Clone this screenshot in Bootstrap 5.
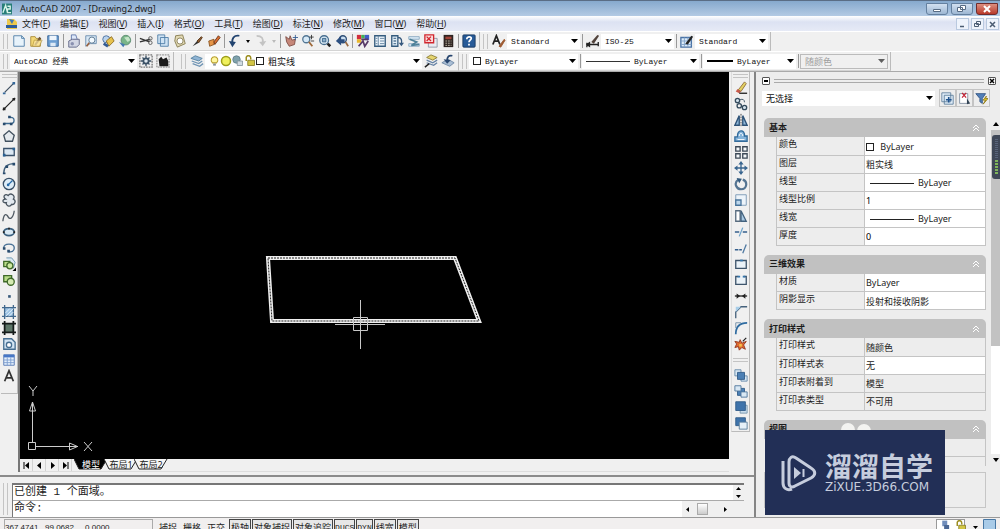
<!DOCTYPE html>
<html lang="zh-CN">
<head>
<meta charset="utf-8">
<meta name="viewport" content="width=device-width, initial-scale=1">
<title>AutoCAD 2007 - [Drawing2.dwg]</title>
<link href="https://cdn.jsdelivr.net/npm/bootstrap@5.3.0/dist/css/bootstrap.min.css" rel="stylesheet">
<style>
:root{--face:#f0f0f0;--edge:#b4b4b4;--ui:"Noto Sans","Noto Sans CJK SC",sans-serif;--mono:"Liberation Mono","Noto Sans CJK SC",monospace}
body{height:100vh;background:var(--face);font:9px/12px var(--ui);color:#1c1c1c}
button{border:0;background:none;padding:0;color:inherit;font:inherit;line-height:inherit}
svg{display:block;flex:none}
.ico{width:14px;height:14px}
.title-bar{height:16px;border-top:1px solid #5a6d85;background:linear-gradient(#86a9cd,#b3cae4);font-size:9px;padding:0 2px}
.win-set{gap:3px}
.win-btn{width:22px;height:12px;border:1px solid #64809f;border-radius:0 0 3px 3px;background:linear-gradient(#d2e0f0,#9db7d3)}
.win-btn.shut{background:linear-gradient(#dd8f80,#b8392a);border-color:#702c2c}
.menu-bar{height:15px;background:linear-gradient(#fff,#dce2f2 40%,#e6eaf6);padding:0 1px 0 6px}
.menu-bar a{color:#1c1c1c;text-decoration:none;font-size:9px;margin-right:10px;white-space:nowrap}
.mdi-set{gap:2px}
.mdi-btn{width:13px;height:12px;border:1px solid #b9c9df;background:#eef3fb}
.tool-row{height:20px;border-top:1px solid #fff}
.tool-row.second{height:21px;border-bottom:1px solid #aaa}
.band{height:19px;border-right:1px solid #bbb;border-bottom:1px solid #d4d4d4;padding-right:2px}
.grip{width:5px;height:15px;border:solid #c4c4c4;border-width:0 1px;margin:0 2px 0 3px;flex:none}
.grip-h{width:15px;height:4px;border:solid #c4c4c4;border-width:1px 0;margin:2px 0;flex:none}
.grip-h.mid{margin:6px 0 5px}
.tool{width:17px;height:17px;display:flex;align-items:center;justify-content:center;flex:none}
.drop{width:9px;height:17px;display:flex;align-items:center;justify-content:center;flex:none}
.vsep{width:1px;height:14px;background:#999;margin:0 1px 0 2px;flex:none}
.combo{height:15px;background:#fff;display:flex;align-items:center;flex:none;padding-left:4px;min-width:0}
.combo .form-select{border:0;border-radius:0;padding:0 10px 0 0;height:15px;min-width:0;flex:1;font:8px/15px var(--mono);color:#111;background-color:transparent;background-size:7px 4px;background-position:right 2px center;
--bs-form-select-bg-img:url("data:image/svg+xml,%3Csvg xmlns='http://www.w3.org/2000/svg' viewBox='0 0 7 4'%3E%3Cpath d='M0 0h7L3.500 4z'/%3E%3C/svg%3E")}
.combo .form-select.cn{font:9px/15px var(--ui)}
.combo.off{background:var(--face);border:1px solid #bbb}
.combo.off .form-select{color:#666;height:13px;line-height:13px;opacity:.6}
.swatch{width:8px;height:8px;border:1px solid #222;background:#fff;flex:none;display:inline-block}
.side{width:20px;padding-left:1px;border-right:2px solid #777}
.side-in{width:17px;padding-bottom:9px;border:solid #bbb;border-width:0 1px 1px 0}
.side .tool,.side-r .tool{height:16px}
.side-r{width:25px;padding-left:2px}
.side-r .side-in{width:19px;border-left:1px solid #ddd;padding-bottom:0}
.model{background:#000;min-height:0}
.ucs{left:4px;bottom:1px}
.tabs{height:13px;border-bottom:1px solid #ddd}
.nav-b{width:13px;height:12px;border-right:1px solid #d2d2d2;display:flex;align-items:center;justify-content:center}
.sheet{position:relative;height:11px;line-height:10px;margin-right:-4px;width:34px;text-align:center;color:#222;white-space:nowrap}
.sheet svg{position:absolute;left:0;top:0;z-index:-1}
.tabs-in{isolation:isolate;padding-left:2px}
.sheet.on{color:#fff}
.console{height:42px;margin-top:3px;border-top:2px solid #8b8b8b;padding:6px 10px 0 0}
.console-in{border:1px solid #777;border-width:2px 0 0 1px;font:11px/15px var(--mono);color:#222}
.console .grip{height:32px;margin-right:4px}
.log{height:16px;background:#fff;border-bottom:1px solid #aaa;padding-left:1px;white-space:pre}
.cmd{height:16px;padding-left:1px;background:#fff}
.cmd input{border:0;outline:0;padding:0;min-width:0;font:inherit;height:15px}
.sb-v{width:11px;height:15px;background:var(--face)}
.sb-h{width:62px;height:16px;background:var(--face);font-size:8px}
.thumb{width:11px;height:12px;border:1px solid #aaa;background:linear-gradient(#fff,#ccc)}
.palette{width:246px;border-left:2px solid #858585;padding:5px 0 0 6px;background:#ededed}
.dline{height:4px;border:solid #aaa;border-width:1px 0}
.box-btn{width:8px;height:8px;border:1px solid #555;border-radius:1px;background:#fff;display:flex;align-items:center;justify-content:center}
.pick{margin:4px 0 11px}
.pal-btn{width:17px;height:18px;border:1px solid #c4c4c4;display:flex;align-items:center;justify-content:center}
.sheets{height:348px}
.sec-list{padding-left:2px}
.sec{margin-bottom:9px;width:222px}
.sec-h{height:19px;width:100%;background:#c1c1c1;border-radius:5px 5px 0 0;font-weight:700;font-size:9px;padding:0 6px 0 5px}
.props{width:210px;margin-left:12px;table-layout:fixed;border-collapse:collapse;font-size:9px;line-height:12px}
.props th{width:88px;font-weight:400;padding:0 0 3px 2px;border:1px solid #c4c4c4;height:18px;line-height:14px;border-top:0}
.props td{background:#fff;border:1px solid #c4c4c4;padding:2px 0 0 1px;border-top:0;height:18px;line-height:14px}
.props td.ro{background:#ededed}
.props input{border:0;padding:0;height:14px;width:100px;outline:0;background:none;display:block;font-size:9px}
.scroller{width:9px;background:#fff}
.scroller .bar{height:216px;background:#c2c2c2}
.scroller .arr{height:12px;background:#ededed}
.gauge{width:8px;height:44px;right:0;top:63px;background:#3f4757;border-radius:3px 0 0 3px}
.hint{height:36px;border:1px solid #c6c6c6;width:222px;margin:6px 0 0 2px}
.status-bar{height:12px;border-top:1px solid #999;overflow:hidden;background:#f1efef}
.status-bar>*{margin-top:1px}
.coords{height:16px;width:149px;border:1px solid #aaa;font:8px/16px "Liberation Sans",sans-serif;white-space:pre}
.mode{height:16px;font-size:9px;line-height:15px;white-space:nowrap;border:1px solid transparent;padding:0 1px;margin-right:2px}
.mode.on{border-color:#444;background:#e7e7e7;margin-right:1px}
.mode.la{font-family:var(--mono);font-size:8px;padding:0}
.tray{width:29px;height:16px;border:1px solid #999;background:#fff}
.promo{right:55px;bottom:14px;width:180px;height:85px;background:#222f56;color:#c6cddd}
.promo b{font:700 27px/28px "Noto Sans CJK SC",sans-serif}
.promo span{font:12px/14px "DejaVu Sans",sans-serif}
.ears{left:77px;top:3px}
</style>
</head>
<body class="d-flex flex-column overflow-hidden position-relative">

<svg width="0" height="0" class="position-absolute" aria-hidden="true">
<defs>
<symbol id="new" viewBox="0 0 16 16"><path d="M2 2h9l3 3v9H2z" fill="#e8f3fb" stroke="#4d7ca6"/><path d="M11 2v3h3" fill="none" stroke="#4d7ca6"/></symbol>
<symbol id="open" viewBox="0 0 16 16"><path d="M2 3h5l1 2h5v9H2z" fill="#f4d977" stroke="#a98b37"/><path d="M6 12l6-9 2 2-6 8z" fill="#6b5135"/><path d="M4 14l2-7h9l-3 7z" fill="#ffeaa5" stroke="#a98b37" opacity=".7"/></symbol>
<symbol id="save" viewBox="0 0 16 16"><path d="M2 2h12v12H2z" fill="#6d9fd2" stroke="#2d5c94"/><path d="M4 2h8v5H4z" fill="#eef5fc"/><path d="M5 10h6v4H5z" fill="#dce9f6"/></symbol>
<symbol id="print" viewBox="0 0 16 16"><path d="M5 1h5l2 6H5z" fill="#dfe9fa" stroke="#5d74a8"/><path d="M2 8l4-2h8v6l-3 3H2z" fill="#d2d6e4" stroke="#5b6284"/><circle cx="6" cy="11" r="2" fill="#8990b0"/></symbol>
<symbol id="preview" viewBox="0 0 16 16"><path d="M2 2h12v9H7l-5 3z" fill="#d8e8f5" stroke="#688cac"/><circle cx="9" cy="7" r="3.500" fill="#f3faff" stroke="#54708a"/><path d="M6 10l-3 4" stroke="#9a6240" stroke-width="2"/></symbol>
<symbol id="publish" viewBox="0 0 16 16"><circle cx="6" cy="6" r="4" fill="#b9d3ee" stroke="#466b9b"/><path d="M6 8l6-5 3 5-6 6z" fill="#e6c14c" stroke="#8e6b20"/><path d="M3 11l5 3" stroke="#335b92" stroke-width="3"/></symbol>
<symbol id="globe" viewBox="0 0 16 16"><circle cx="9" cy="7" r="5.500" fill="#79b589" stroke="#5c8a70"/><path d="M7 4l5-1 2 4-3 2z" fill="#c5e5c8"/><path d="M1 9l7 3-2 3z" fill="#447bb0"/></symbol>
<symbol id="cut" viewBox="0 0 16 16"><path d="M1 5l11 4M1 9l12-3" stroke="#333" stroke-width="1.500"/><circle cx="13" cy="5" r="2" fill="none" stroke="#555"/><circle cx="13" cy="10" r="2" fill="none" stroke="#555"/></symbol>
<symbol id="copyc" viewBox="0 0 16 16"><path d="M2 1h8v10H2zM5 4h9v10H5z" fill="#cfe3f4" stroke="#4d7ca6"/></symbol>
<symbol id="paste" viewBox="0 0 16 16"><path d="M3 2l8-1 3 10-9 4-3-7z" fill="#e2d9b4" stroke="#82784d"/><circle cx="8" cy="8" r="3.500" fill="#fff" stroke="#837b57"/></symbol>
<symbol id="brush" viewBox="0 0 16 16"><path d="M3 14l5-6 2 2z" fill="#333"/><path d="M8 8l5-5 1 1-4 6z" fill="#8a5a32" stroke="#553213"/></symbol>
<symbol id="block" viewBox="0 0 16 16"><path d="M2 8l6-2v6l-5 2z" fill="#e69547" stroke="#875322"/><path d="M8 9l5-7 2 2-6 8z" fill="#dc6f32" stroke="#693214"/></symbol>
<symbol id="undo" viewBox="0 0 16 16"><path d="M13 2C7 1 4 5 5 11" fill="none" stroke="#21436f" stroke-width="2"/><path d="M1 8l8 1-4 6z" fill="#21436f"/></symbol>
<symbol id="redo" viewBox="0 0 16 16"><path d="M3 2c6 0 8 3 7 9" fill="none" stroke="#c3c3c3" stroke-width="2"/><path d="M6 9l8-1-4 6z" fill="#c3c3c3"/></symbol>
<symbol id="pan" viewBox="0 0 16 16"><path d="M2 3l4 3 1-4 2 5 4-1-1 6-6 2-3-5z" fill="#c68779" stroke="#7d4b43"/><path d="M13 1v6M10 4h6" stroke="#365e92"/></symbol>
<symbol id="zoom" viewBox="0 0 16 16"><circle cx="6" cy="6" r="4" fill="#d6e9f7" stroke="#527694" stroke-width="1.500"/><path d="M9 9l4 5" stroke="#a06a3a" stroke-width="2"/><path d="M12 1v5M9.500 3.500h5M11 8h4" stroke="#333"/></symbol>
<symbol id="zoomw" viewBox="0 0 16 16"><circle cx="7" cy="7" r="5" fill="#e0eff9" stroke="#476d8e" stroke-width="1.500"/><path d="M5 5h4v4H5z" fill="#8db0cc" stroke="#345e83"/><path d="M11 11l3 3" stroke="#222" stroke-width="3"/></symbol>
<symbol id="zoomp" viewBox="0 0 16 16"><circle cx="9" cy="6" r="4" fill="#cbdff1" stroke="#2f4f76" stroke-width="1.500"/><path d="M12 9l3 5" stroke="#9b6b43" stroke-width="2"/><path d="M1 8l6-6v4h4v4H7v3z" fill="#2c4f80"/></symbol>
<symbol id="propi" viewBox="0 0 16 16"><path d="M1 1h5v5H1z" fill="#d22e3c"/><path d="M6 1h4v4H6z" fill="#43af57"/><path d="M10 1h5v6h-5z" fill="#405cc8"/><path d="M1 6h5v4H1z" fill="#e8b62c"/><path d="M6 6h8M3 14l5-6 2 6 4-6" stroke="#573a68" stroke-width="2" fill="none"/></symbol>
<symbol id="dcen" viewBox="0 0 16 16"><path d="M2 2h12v12H2z" fill="#edf5fb" stroke="#355c7e" stroke-width="1.500"/><path d="M6 2v12M8 5h5M8 8h5M8 11h5M3 5h2M3 8h2M3 11h2" stroke="#5c7e9b"/></symbol>
<symbol id="tpal" viewBox="0 0 16 16"><path d="M2 2h7v12H2z" fill="#e0edf6" stroke="#355c7e" stroke-width="1.500"/><path d="M4 5h3M4 8h3M4 11h3" stroke="#5c7e9b" stroke-width="1.500"/><path d="M9 4c4 0 5 3 4 8" fill="none" stroke="#37597e" stroke-width="1.500"/><path d="M10 10l3 4 3-4z" fill="#37597e"/></symbol>
<symbol id="sset" viewBox="0 0 16 16"><path d="M2 3h12v3H2zM2 11h12v3H2z" fill="#d7e7f4" stroke="#8ba9c2"/><path d="M3 6l8 3-6 4 9-1" fill="none" stroke="#4e8199" stroke-width="2"/></symbol>
<symbol id="mark" viewBox="0 0 16 16"><path d="M5 5h10v10H5z" fill="#e8ebf0" stroke="#8f95a4"/><path d="M1 1h10v9H1z" fill="#fbdede" stroke="#d2262d" stroke-width="1.500"/><path d="M3 3l5 5M8 3L3 8" stroke="#d2262d" stroke-width="1.500"/></symbol>
<symbol id="calc" viewBox="0 0 16 16"><path d="M3 1h11v14H3z" fill="#2d2421"/><path d="M5 3h7v3H5z" fill="#a24337"/><path d="M5 8h7M5 10.500h7M5 13h7" stroke="#c9c2b0" stroke-dasharray="2 1"/></symbol>
<symbol id="help" viewBox="0 0 16 16"><rect x="1" y="1" width="14" height="14" rx="1" fill="#285b98" stroke="#173860"/><path d="M5.500 6c0-4 6-3 5-.500C10 7 8 7 8 9.500M8 11v2" fill="none" stroke="#fff" stroke-width="2"/></symbol>
<symbol id="tstyle" viewBox="0 0 16 16"><path d="M1 12L5 2l4 10M3 8h5" fill="none" stroke="#222" stroke-width="2"/><path d="M8 14l6-8 1 1-5 8z" fill="#9e5b32" stroke="#9e5b32"/></symbol>
<symbol id="dstyle" viewBox="0 0 16 16"><path d="M1 10v5M14 9v5M1 12h13M1 12l3-2v4z" stroke="#222" stroke-width="1.500"/><path d="M6 9l7-8 2 1-6 9z" fill="#51423a"/></symbol>
<symbol id="tbst" viewBox="0 0 16 16"><path d="M1 4h12v11H1z" fill="#dcecfa" stroke="#4a73a6" stroke-width="1.500"/><path d="M1 8h12M5 4v11M9 4v11M1 12h12" stroke="#7f9fc6"/><path d="M6 11l7-9 2 1-6 9z" fill="#222"/></symbol>
<symbol id="gear" viewBox="0 0 16 16"><path d="M1 1h14v14H1z" fill="none" stroke="#777" stroke-width="1.500" stroke-dasharray="2 1"/><circle cx="8" cy="8" r="3" fill="#dfe8ef" stroke="#3c5266" stroke-width="2"/><path d="M8 2v3M8 11v3M2 8h3M11 8h3M4 4l2 2M12 4l-2 2M4 12l2-2M12 12l-2-2" stroke="#3c5266" stroke-width="1.500"/></symbol>
<symbol id="ws" viewBox="0 0 16 16"><path d="M1 1h14v14H1z" fill="none" stroke="#999" stroke-width="1.500" stroke-dasharray="2 1"/><path d="M3 6l3-3 2 3 4-2 2 4v6H4z" fill="#1c1c1c"/></symbol>
<symbol id="layers" viewBox="0 0 16 16"><path d="M1 5l5-3 8 3-4 3z" fill="#8fb4d4" stroke="#55809f"/><path d="M2 8l8 3 4-3M3 11l8 3 4-3" fill="none" stroke="#6f94b4" stroke-width="1.500"/></symbol>
<symbol id="laycur" viewBox="0 0 16 16"><path d="M3 4l5-3 7 3-5 3z" fill="#e6d570" stroke="#897c33"/><path d="M3 7l7 3 5-3M3 10l8 3 4-3" fill="none" stroke="#6683a5" stroke-width="1.500"/><path d="M1 15l5-4" stroke="#222" stroke-width="1.500"/></symbol>
<symbol id="layprev" viewBox="0 0 16 16"><path d="M1 10l7-4 7 4-5 4z" fill="#aabed4" stroke="#6d87a5"/><path d="M13 2C9 1 7 3 7 8" fill="none" stroke="#27456e" stroke-width="2"/><path d="M3 6l4 5 4-4z" fill="#27456e"/></symbol>
<symbol id="bulb" viewBox="0 0 16 16"><path d="M5 10C1 6 4 1 8 1s7 5 3 9z" fill="#fff7a0" stroke="#b69d2d" stroke-width="1.500"/><path d="M6 11h4v3H6z" fill="#87909b"/></symbol>
<symbol id="sun" viewBox="0 0 16 16"><circle cx="8" cy="8" r="6" fill="#eff05d" stroke="#9d9e1a" stroke-width="2"/></symbol>
<symbol id="vp" viewBox="0 0 16 16"><circle cx="6" cy="6" r="5" fill="#7fa2ac" stroke="#597985"/><path d="M7 8h7v6H7z" fill="#d0dbe3" stroke="#7d8d96"/></symbol>
<symbol id="unlock" viewBox="0 0 16 16"><path d="M3 8V3c1-3 6-3 6 1v2" fill="none" stroke="#9d8f22" stroke-width="2"/><path d="M5 7h9v7H5z" fill="#d2c544" stroke="#7e731a"/></symbol>
<symbol id="line" viewBox="0 0 16 16"><path d="M3 13L13 3" stroke="#3f5061" stroke-width="1.500"/><path d="M1 13h3v2H1zM12 1h3v3h-3z" fill="#35699b"/></symbol>
<symbol id="xline" viewBox="0 0 16 16"><path d="M1 15L15 1" stroke="#222" stroke-width="1.500"/><path d="M1 12h3v3H1zM12 1h3v3h-3z" fill="#222"/></symbol>
<symbol id="pline" viewBox="0 0 16 16"><path d="M2 12h8c5 0 5-7 0-7H8" fill="none" stroke="#3e6b91" stroke-width="1.500"/><path d="M1 11h3v3H1zM7 3h3v3H7zM9 11h3v3H9z" fill="#284b6d"/></symbol>
<symbol id="poly" viewBox="0 0 16 16"><path d="M8 2l6 5-2 7H4L2 7z" fill="#e4e9ed" stroke="#41505e" stroke-width="1.500"/></symbol>
<symbol id="rect" viewBox="0 0 16 16"><path d="M2 4h12v8H2z" fill="#dce8f3" stroke="#3a516a" stroke-width="1.500"/><path d="M1 10h3v3H1zM12 3h3v3h-3z" fill="#296093"/></symbol>
<symbol id="arc" viewBox="0 0 16 16"><path d="M2 14C2 7 6 3 14 3" fill="none" stroke="#43617c" stroke-width="1.500"/><path d="M1 13h3v2H1zM4 5h3v3H4zM12 2h3v3h-3z" fill="#284b6d"/></symbol>
<symbol id="circ" viewBox="0 0 16 16"><circle cx="8" cy="8" r="6.500" fill="#ddecf7" stroke="#374f67" stroke-width="1.500"/><path d="M7 9l5-5" stroke="#276ba9" stroke-width="1.500"/><circle cx="7" cy="9" r="1.500" fill="#276ba9"/></symbol>
<symbol id="cloud" viewBox="0 0 16 16"><path d="M4 7C0 4 4 0 7 3c3-4 9 0 6 4 4 2 1 7-2 6-2 4-7 1-6-2-5 1-5-4-1-4z" fill="#e3e9ef" stroke="#4a5661" stroke-width="1.500"/></symbol>
<symbol id="spline" viewBox="0 0 16 16"><path d="M1 14c1-9 4-9 6-5s6 1 7-7" fill="none" stroke="#505a63" stroke-width="1.500"/></symbol>
<symbol id="ell" viewBox="0 0 16 16"><ellipse cx="8" cy="8" rx="6" ry="4" fill="#d9e9f4" stroke="#3b607f" stroke-width="2"/><path d="M1 7h2v2H1zM13 7h2v2h-2zM7 3h2v2H7z" fill="#222"/></symbol>
<symbol id="ella" viewBox="0 0 16 16"><path d="M2 8c0-6 12-6 12 0 0 4-3 5-7 4" fill="none" stroke="#466f94" stroke-width="1.500"/><path d="M1 7h3v3H1zM6 10h3v3H6z" fill="#284b6d"/></symbol>
<symbol id="insb" viewBox="0 0 16 16"><path d="M5 1h6l4 5-2 7" fill="#d8e8f1" stroke="#6591ad"/><path d="M2 5h7v6H2z" fill="#b9dc88" stroke="#3f6929" stroke-width="1.500"/><circle cx="9" cy="10" r="3.500" fill="#cde8a1" stroke="#3f6929" stroke-width="1.500"/><path d="M16 12v4h-4z"/></symbol>
<symbol id="mkb" viewBox="0 0 16 16"><path d="M2 3h9v7H2z" fill="#b9dc88" stroke="#3f6929" stroke-width="1.500"/><circle cx="10" cy="10" r="4" fill="#d5eab2" stroke="#3f6929" stroke-width="1.500"/></symbol>
<symbol id="point" viewBox="0 0 16 16"><path d="M7 7h3v3H7z" fill="#375a7b"/></symbol>
<symbol id="hatch" viewBox="0 0 16 16"><path d="M3 3h10v10H3z" fill="#9fc5e5"/><path d="M3 0v16M13 0v16M0 3h16M0 13h16" stroke="#42698e" stroke-width="1.500"/><path d="M4 9l5-5M4 13l9-9M8 13l5-5" stroke="#e9f4fb"/></symbol>
<symbol id="grad" viewBox="0 0 16 16"><path d="M3 3h10v10H3z" fill="#5d7668"/><path d="M3 0v16M13 0v16M0 3h16M0 13h16" stroke="#151b1a" stroke-width="2"/></symbol>
<symbol id="region" viewBox="0 0 16 16"><path d="M2 2h9l4 4v8H2z" fill="#d2e4f3" stroke="#466e91" stroke-width="1.500"/><circle cx="8" cy="9" r="3" fill="#fff" stroke="#466e91" stroke-width="1.500"/></symbol>
<symbol id="tbl" viewBox="0 0 16 16"><path d="M2 2h12v12H2z" fill="#e5f0fb" stroke="#5176b4"/><path d="M2 2h12v3H2z" fill="#4777c6"/><path d="M6 5v9M10 5v9M2 8h12M2 11h12" stroke="#7c9dcf"/></symbol>
<symbol id="mtext" viewBox="0 0 16 16"><path d="M3 14L8 2l5 12M5 10h6" fill="none" stroke="#333" stroke-width="2"/></symbol>
<symbol id="erase" viewBox="0 0 16 16"><path d="M5 10l7-9 2 2-6 9z" fill="#e3d163" stroke="#8c6c36"/><path d="M4 9l4 3-2 2-4-2z" fill="#c85a4b"/><path d="M6 14h9" stroke="#222" stroke-width="1.500"/></symbol>
<symbol id="copyo" viewBox="0 0 16 16"><circle cx="4" cy="4" r="2.500" fill="#d4e2ec" stroke="#344b5d" stroke-width="1.500"/><path d="M7 3c3-1 5 0 5 3" fill="none" stroke="#344b5d"/><circle cx="6" cy="10" r="2.500" fill="none" stroke="#344b5d" stroke-width="1.500"/><circle cx="12" cy="12" r="2.500" fill="#d4e2ec" stroke="#344b5d" stroke-width="1.500"/></symbol>
<symbol id="mirror" viewBox="0 0 16 16"><path d="M6 3v11H1zM10 3v11h5z" fill="#8db5d7" stroke="#2d5277" stroke-width="1.500"/><path d="M8 1v14" stroke="#333" stroke-dasharray="2 1"/></symbol>
<symbol id="offset" viewBox="0 0 16 16"><path d="M1 14V9h3C3 0 13 0 12 8h3v6z" fill="#86b5db" stroke="#326b9b" stroke-width="1.500"/><path d="M4 12h8M6 8c0-4 4-4 4 0" fill="none" stroke="#fff"/></symbol>
<symbol id="array" viewBox="0 0 16 16"><path d="M2 2h5v5H2zM10 2h5v5h-5zM2 10h5v5H2zM10 10h5v5h-5z" fill="#f5f8fa" stroke="#3c4957" stroke-width="1.500"/></symbol>
<symbol id="move" viewBox="0 0 16 16"><path d="M8 2v12M2 8h12" stroke="#38658f" stroke-width="1.500"/><path d="M8 0l3 4H5zM8 16l3-4H5zM0 8l4-3v6zM16 8l-4-3v6z" fill="#38658f"/></symbol>
<symbol id="rot" viewBox="0 0 16 16"><path d="M5 3c-6 4-2 11 3 11 7 0 8-9 2-11" fill="none" stroke="#547492" stroke-width="2.500"/><path d="M3 1l6 1-3 5z" fill="#335a7e"/></symbol>
<symbol id="scale" viewBox="0 0 16 16"><path d="M2 2h12v12H2z" fill="#edf4fa" stroke="#7696b2"/><path d="M2 8h6v6H2z" fill="#bdd7ec" stroke="#48749b" stroke-width="1.500"/></symbol>
<symbol id="stretch" viewBox="0 0 16 16"><path d="M2 2h5v12H2z" fill="#fff" stroke="#576b7e" stroke-width="1.500"/><path d="M8 2l6 12H8z" fill="#a8c8e2" stroke="#43627e" stroke-width="1.500"/></symbol>
<symbol id="trim" viewBox="0 0 16 16"><path d="M1 8h5M10 8h5" stroke="#345f8c" stroke-width="1.500"/><path d="M6 13l4-10" stroke="#70a4cb" stroke-width="1.500"/></symbol>
<symbol id="extend" viewBox="0 0 16 16"><path d="M1 10h8" stroke="#345f8c" stroke-width="1.500" stroke-dasharray="4 1"/><path d="M10 14l4-10" stroke="#527ba2" stroke-width="1.500"/></symbol>
<symbol id="brk1" viewBox="0 0 16 16"><path d="M2 4h12v9H2z" fill="#eaf2f8" stroke="#3d546b" stroke-width="1.500"/><path d="M7 3h3v2H7z" fill="#3577ae"/></symbol>
<symbol id="brk" viewBox="0 0 16 16"><path d="M5 4H2v9h12V4h-3" fill="#eaf2f8" stroke="#3d546b" stroke-width="1.500"/><path d="M4 3h3v2H4zM10 3h3v2h-3z" fill="#3577ae"/></symbol>
<symbol id="join" viewBox="0 0 16 16"><path d="M1 8h14" stroke="#222" stroke-width="1.500"/><path d="M3 5l4 3-4 3zM13 5L9 8l4 3z" fill="#222"/></symbol>
<symbol id="chamf" viewBox="0 0 16 16"><path d="M2 15V8l6-6h7" fill="none" stroke="#45617b" stroke-width="1.500"/><path d="M2 8V2h6z" fill="#a8cee9"/></symbol>
<symbol id="fillet" viewBox="0 0 16 16"><path d="M2 15C2 7 6 2 15 2" fill="none" stroke="#2f6ca1" stroke-width="2"/><path d="M2 8V2h6" fill="none" stroke="#6f8ba3"/></symbol>
<symbol id="explode" viewBox="0 0 16 16"><path d="M1 5l5 1 1-3 2 4 5-2-3 4 2 5-4-2-3 3-1-4-4 1 2-4z" fill="#df6a30" stroke="#90351b"/><path d="M6 8h3v3H6z" fill="#f3c14a"/><path d="M10 5l4-4" stroke="#222" stroke-width="1.500"/></symbol>
<symbol id="ord1" viewBox="0 0 16 16"><path d="M1 2h7v7H1zM8 9h7v6H8z" fill="#d9e8f4" stroke="#6388a8"/><path d="M4 5h8v8H4z" fill="#4c80b5" stroke="#2f5a87"/></symbol>
<symbol id="ord2" viewBox="0 0 16 16"><path d="M4 5h8v8H4z" fill="#4c80b5" stroke="#2f5a87"/><path d="M1 2h7v6H1zM8 9h7v6H8z" fill="#d9e8f4" stroke="#4b7499"/></symbol>
<symbol id="ord3" viewBox="0 0 16 16"><path d="M7 6h8v9H7z" fill="#c8dcec" stroke="#7493ac"/><path d="M2 2h11v10H2z" fill="#3e73ab" stroke="#2f5a87"/></symbol>
<symbol id="ord4" viewBox="0 0 16 16"><path d="M2 2h11v9H2z" fill="#3e73ab" stroke="#2f5a87"/><path d="M6 7h9v8H6z" fill="#e6f0f8" stroke="#587b99"/></symbol>
<symbol id="chev" viewBox="0 0 8 8"><path d="M1 4l3-3 3 3M1 7l3-3 3 3" fill="none" stroke="#fff" stroke-width="1"/></symbol>
</defs>
</svg>

<header>
  <div class="title-bar d-flex align-items-center">
    <svg class="me-2" width="10" height="12" viewBox="0 0 11 12"><path d="M0 0h11v12H0z" fill="#287e78"/><path d="M1 10l3-8 2 8M6 3h3v3H6v4h4" fill="none" stroke="#d9f5ea" stroke-width="1.500"/></svg>
    <span class="flex-grow-1">AutoCAD 2007 - [Drawing2.dwg]</span>
    <div class="win-set d-flex">
      <button class="win-btn" aria-label="最小化"><svg width="20" height="10"><path d="M6.500 5.500h7v2h-7z" fill="#fff" stroke="#566b84"/></svg></button>
      <button class="win-btn" aria-label="还原"><svg width="20" height="10"><path d="M8.500 1.500h5v4h-5zM5.500 3.500h5v4h-5z" fill="#fff" stroke="#566b84"/></svg></button>
      <button class="win-btn shut" aria-label="关闭"><svg width="20" height="10"><path d="M7 2l6 6M13 2L7 8" stroke="#fff" stroke-width="2"/></svg></button>
    </div>
  </div>
  <nav class="menu-bar d-flex align-items-center">
    <svg class="me-1" width="12" height="13" viewBox="0 0 12 13"><path d="M1 2h7l3 3v7H1z" fill="#edc94e"/><path d="M0 8h11v3H0z" fill="#2c5c9c"/><path d="M3 2l5 1-2 4z" fill="#4179b3"/></svg>
    <a href="#">文件(<u>F</u>)</a><a href="#">编辑(<u>E</u>)</a><a href="#">视图(<u>V</u>)</a><a href="#">插入(<u>I</u>)</a><a href="#">格式(<u>O</u>)</a><a href="#">工具(<u>T</u>)</a><a href="#">绘图(<u>D</u>)</a><a href="#">标注(<u>N</u>)</a><a href="#">修改(<u>M</u>)</a><a href="#">窗口(<u>W</u>)</a><a href="#">帮助(<u>H</u>)</a>
    <div class="mdi-set d-flex ms-auto">
      <button class="mdi-btn" aria-label="最小化图形"><svg width="11" height="10"><path d="M3 7.500h4" stroke="#4b5c72" stroke-width="1.500"/></svg></button>
      <button class="mdi-btn" aria-label="还原图形"><svg width="11" height="10"><path d="M4.500 2.500h4v3h-4zM2.500 4.500h4v3h-4z" fill="#eef3fb" stroke="#4b5c72"/></svg></button>
      <button class="mdi-btn" aria-label="关闭图形"><svg width="11" height="10"><path d="M3 3l5 5M8 3L3 8" stroke="#4b5c72" stroke-width="1.500"/></svg></button>
    </div>
  </nav>
  <div class="tool-row d-flex">
    <div class="band d-flex align-items-center">
      <div class="grip"></div>
      <button class="tool" aria-label="新建"><svg class="ico"><use href="#new"/></svg></button>
      <button class="tool" aria-label="打开"><svg class="ico"><use href="#open"/></svg></button>
      <button class="tool" aria-label="保存"><svg class="ico"><use href="#save"/></svg></button>
      <div class="vsep"></div>
      <button class="tool" aria-label="打印"><svg class="ico"><use href="#print"/></svg></button>
      <button class="tool" aria-label="打印预览"><svg class="ico"><use href="#preview"/></svg></button>
      <button class="tool" aria-label="发布"><svg class="ico"><use href="#publish"/></svg></button>
      <button class="tool" aria-label="三维 DWF"><svg class="ico"><use href="#globe"/></svg></button>
      <div class="vsep"></div>
      <button class="tool" aria-label="剪切"><svg class="ico"><use href="#cut"/></svg></button>
      <button class="tool" aria-label="复制"><svg class="ico"><use href="#copyc"/></svg></button>
      <button class="tool" aria-label="粘贴"><svg class="ico"><use href="#paste"/></svg></button>
      <button class="tool" aria-label="特性匹配"><svg class="ico"><use href="#brush"/></svg></button>
      <button class="tool" aria-label="块编辑器"><svg class="ico"><use href="#block"/></svg></button>
      <div class="vsep"></div>
      <button class="tool" aria-label="放弃"><svg class="ico"><use href="#undo"/></svg></button>
      <button class="drop" aria-label="放弃列表"><svg width="4" height="3"><path d="M0 0h4L2 3z"/></svg></button>
      <button class="tool" aria-label="重做"><svg class="ico"><use href="#redo"/></svg></button>
      <button class="drop" aria-label="重做列表"><svg width="4" height="3"><path d="M0 0h4L2 3z" fill="#bbb"/></svg></button>
      <div class="vsep"></div>
      <button class="tool" aria-label="实时平移"><svg class="ico"><use href="#pan"/></svg></button>
      <button class="tool" aria-label="实时缩放"><svg class="ico"><use href="#zoom"/></svg></button>
      <button class="tool" aria-label="窗口缩放"><svg class="ico"><use href="#zoomw"/></svg></button>
      <button class="tool" aria-label="缩放上一个"><svg class="ico"><use href="#zoomp"/></svg></button>
      <div class="vsep"></div>
      <button class="tool" aria-label="特性"><svg class="ico"><use href="#propi"/></svg></button>
      <button class="tool" aria-label="设计中心"><svg class="ico"><use href="#dcen"/></svg></button>
      <button class="tool" aria-label="工具选项板"><svg class="ico"><use href="#tpal"/></svg></button>
      <button class="tool" aria-label="图纸集"><svg class="ico"><use href="#sset"/></svg></button>
      <button class="tool" aria-label="标记集"><svg class="ico"><use href="#mark"/></svg></button>
      <button class="tool" aria-label="计算器"><svg class="ico"><use href="#calc"/></svg></button>
      <div class="vsep"></div>
      <button class="tool" aria-label="帮助"><svg class="ico"><use href="#help"/></svg></button>
    </div>
    <div class="band d-flex align-items-center">
      <div class="grip"></div>
      <span class="tool"><svg class="ico"><use href="#tstyle"/></svg></span>
      <div class="combo" style="width:73px"><select class="form-select" aria-label="文字样式"><option>Standard</option></select></div>
      <div class="vsep"></div>
      <span class="tool"><svg class="ico"><use href="#dstyle"/></svg></span>
      <div class="combo" style="width:73px"><select class="form-select" aria-label="标注样式"><option>ISO-25</option></select></div>
      <div class="vsep"></div>
      <span class="tool"><svg class="ico"><use href="#tbst"/></svg></span>
      <div class="combo" style="width:73px"><select class="form-select" aria-label="表格样式"><option>Standard</option></select></div>
    </div>
  </div>
  <div class="tool-row second d-flex">
    <div class="band d-flex align-items-center">
      <div class="grip"></div>
      <div class="combo" style="width:127px"><select class="form-select" aria-label="工作空间"><option>AutoCAD 经典</option></select></div>
      <button class="tool" aria-label="工作空间设置"><svg class="ico"><use href="#gear"/></svg></button>
      <button class="tool" aria-label="我的工作空间"><svg class="ico"><use href="#ws"/></svg></button>
    </div>
    <div class="band d-flex align-items-center ps-1">
      <div class="grip"></div>
      <button class="tool" aria-label="图层特性"><svg class="ico"><use href="#layers"/></svg></button>
      <div class="combo" style="width:217px">
        <svg width="11" height="11"><use href="#bulb"/></svg><svg width="12" height="12"><use href="#sun"/></svg><svg width="12" height="12"><use href="#vp"/></svg><svg width="12" height="12"><use href="#unlock"/></svg>
        <span class="swatch me-1"></span><select class="form-select cn" aria-label="图层"><option>粗实线</option></select>
      </div>
      <button class="tool" aria-label="置为当前图层"><svg class="ico"><use href="#laycur"/></svg></button>
      <button class="tool" aria-label="上一个图层"><svg class="ico"><use href="#layprev"/></svg></button>
    </div>
    <div class="band d-flex align-items-center">
      <div class="grip"></div>
      <div class="combo" style="width:109px"><span class="swatch me-1"></span><select class="form-select" aria-label="颜色"><option>ByLayer</option></select></div>
      <div class="vsep"></div>
      <div class="combo" style="width:117px"><svg class="me-1" width="44" height="1"><path d="M0 .5h44" stroke="#333"/></svg><select class="form-select" aria-label="线型"><option>ByLayer</option></select></div>
      <div class="vsep"></div>
      <div class="combo" style="width:93px"><svg class="me-1" width="26" height="2"><path d="M0 1h26" stroke="#000" stroke-width="2"/></svg><select class="form-select" aria-label="线宽"><option>ByLayer</option></select></div>
      <div class="vsep"></div>
      <div class="combo off" style="width:88px"><select class="form-select cn" aria-label="打印样式" disabled><option>随颜色</option></select></div>
    </div>
  </div>
</header>

<main class="d-flex flex-grow-1 overflow-hidden">
  <section class="d-flex flex-column flex-grow-1 overflow-hidden">
    <div class="d-flex flex-grow-1 overflow-hidden">
      <aside class="side">
        <div class="side-in d-flex flex-column align-items-center">
        <div class="grip-h"></div>
        <button class="tool" aria-label="直线"><svg class="ico"><use href="#line"/></svg></button>
        <button class="tool" aria-label="构造线"><svg class="ico"><use href="#xline"/></svg></button>
        <button class="tool" aria-label="多段线"><svg class="ico"><use href="#pline"/></svg></button>
        <button class="tool" aria-label="正多边形"><svg class="ico"><use href="#poly"/></svg></button>
        <button class="tool" aria-label="矩形"><svg class="ico"><use href="#rect"/></svg></button>
        <button class="tool" aria-label="圆弧"><svg class="ico"><use href="#arc"/></svg></button>
        <button class="tool" aria-label="圆"><svg class="ico"><use href="#circ"/></svg></button>
        <button class="tool" aria-label="修订云线"><svg class="ico"><use href="#cloud"/></svg></button>
        <button class="tool" aria-label="样条曲线"><svg class="ico"><use href="#spline"/></svg></button>
        <button class="tool" aria-label="椭圆"><svg class="ico"><use href="#ell"/></svg></button>
        <button class="tool" aria-label="椭圆弧"><svg class="ico"><use href="#ella"/></svg></button>
        <button class="tool" aria-label="插入块"><svg class="ico"><use href="#insb"/></svg></button>
        <button class="tool" aria-label="创建块"><svg class="ico"><use href="#mkb"/></svg></button>
        <button class="tool" aria-label="点"><svg class="ico"><use href="#point"/></svg></button>
        <button class="tool" aria-label="图案填充"><svg class="ico"><use href="#hatch"/></svg></button>
        <button class="tool" aria-label="渐变色"><svg class="ico"><use href="#grad"/></svg></button>
        <button class="tool" aria-label="面域"><svg class="ico"><use href="#region"/></svg></button>
        <button class="tool" aria-label="表格"><svg class="ico"><use href="#tbl"/></svg></button>
        <button class="tool" aria-label="多行文字"><svg class="ico"><use href="#mtext"/></svg></button>
        </div>
      </aside>
      <div class="d-flex flex-column flex-grow-1 overflow-hidden">
        <div class="model flex-grow-1 position-relative overflow-hidden">
          <svg width="100%" height="100%" role="img" aria-label="面域图形">
            <path d="M248 186h187l24 63H252z" fill="none" stroke="#eee" stroke-width="4"/>
            <path d="M248 186h187l24 63H252z" fill="none" stroke="#222" stroke-dasharray="2 1"/>
            <path d="M315 252.500h50M340.500 228v49M333.500 245.500h14v13h-14z" fill="none" stroke="#c8c8c8"/>
          </svg>
          <svg class="ucs position-absolute" width="72" height="75" viewBox="0 0 72 75" fill="none" stroke="#ccc">
            <path d="M4.500 59.500h7v7h-7zM8.500 59V19M12 63.500h42M5.500 28l3-9 3 9zM45.500 60l8 3.500-8 3.500z"/>
            <path d="M5 3l4 5 4-5M9 8v5M60 59l8 9M68 59l-8 9"/>
          </svg>
        </div>
        <div class="tabs d-flex">
          <button class="nav-b" aria-label="第一个"><svg width="7" height="7"><path d="M1 0v7" stroke="#000"/><path d="M6 0v7L2 3.500z"/></svg></button>
          <button class="nav-b" aria-label="上一个"><svg width="7" height="7"><path d="M5 0v7L1 3.500z"/></svg></button>
          <button class="nav-b" aria-label="下一个"><svg width="7" height="7"><path d="M2 0v7l4-3.500z"/></svg></button>
          <button class="nav-b" aria-label="最后一个"><svg width="7" height="7"><path d="M6 0v7" stroke="#000"/><path d="M1 0v7l4-3.500z"/></svg></button>
          <div class="tabs-in d-flex">
            <button class="sheet on"><svg width="34" height="11"><path d="M0 0l5 10h22l6-10" fill="#000" stroke="#222"/></svg>模型</button>
            <button class="sheet"><svg width="34" height="11"><path d="M0 0l5 10h22l6-10" fill="#f6f6f6" stroke="#222"/></svg>布局1</button>
            <button class="sheet"><svg width="34" height="11"><path d="M0 0l5 10h22l6-10" fill="#f6f6f6" stroke="#222"/></svg>布局2</button>
          </div>
        </div>
      </div>
      <aside class="side-r">
        <div class="side-in d-flex flex-column align-items-center">
        <div class="grip-h"></div>
        <button class="tool" aria-label="删除"><svg class="ico"><use href="#erase"/></svg></button>
        <button class="tool" aria-label="复制对象"><svg class="ico"><use href="#copyo"/></svg></button>
        <button class="tool" aria-label="镜像"><svg class="ico"><use href="#mirror"/></svg></button>
        <button class="tool" aria-label="偏移"><svg class="ico"><use href="#offset"/></svg></button>
        <button class="tool" aria-label="阵列"><svg class="ico"><use href="#array"/></svg></button>
        <button class="tool" aria-label="移动"><svg class="ico"><use href="#move"/></svg></button>
        <button class="tool" aria-label="旋转"><svg class="ico"><use href="#rot"/></svg></button>
        <button class="tool" aria-label="缩放"><svg class="ico"><use href="#scale"/></svg></button>
        <button class="tool" aria-label="拉伸"><svg class="ico"><use href="#stretch"/></svg></button>
        <button class="tool" aria-label="修剪"><svg class="ico"><use href="#trim"/></svg></button>
        <button class="tool" aria-label="延伸"><svg class="ico"><use href="#extend"/></svg></button>
        <button class="tool" aria-label="打断于点"><svg class="ico"><use href="#brk1"/></svg></button>
        <button class="tool" aria-label="打断"><svg class="ico"><use href="#brk"/></svg></button>
        <button class="tool" aria-label="合并"><svg class="ico"><use href="#join"/></svg></button>
        <button class="tool" aria-label="倒角"><svg class="ico"><use href="#chamf"/></svg></button>
        <button class="tool" aria-label="圆角"><svg class="ico"><use href="#fillet"/></svg></button>
        <button class="tool" aria-label="分解"><svg class="ico"><use href="#explode"/></svg></button>
        <div class="grip-h mid"></div>
        <button class="tool" aria-label="前置"><svg class="ico"><use href="#ord1"/></svg></button>
        <button class="tool" aria-label="后置"><svg class="ico"><use href="#ord2"/></svg></button>
        <button class="tool" aria-label="置于对象之上"><svg class="ico"><use href="#ord3"/></svg></button>
        <button class="tool" aria-label="置于对象之下"><svg class="ico"><use href="#ord4"/></svg></button>
        </div>
      </aside>
    </div>
    <div class="console d-flex">
      <div class="grip"></div>
      <div class="console-in flex-grow-1">
        <div class="d-flex log"><span class="flex-grow-1">已创建 1 个面域。</span>
          <div class="sb-v d-flex flex-column align-items-center justify-content-around"><svg width="5" height="3"><path d="M0 3h5L2.500 0z"/></svg><svg width="5" height="3"><path d="M0 0h5L2.500 3z"/></svg></div></div>
        <div class="d-flex cmd"><label for="cmd">命令:</label><input id="cmd" class="flex-grow-1" type="text" autocomplete="off">
          <div class="sb-h d-flex align-items-center ps-1 gap-2"><svg width="3" height="5"><path d="M3 0v5L0 2.500z"/></svg><div class="thumb"></div><svg class="ms-2" width="3" height="5"><path d="M0 0v5l3-2.500z"/></svg></div></div>
      </div>
    </div>
  </section>

  <aside class="palette flex-shrink-0 position-relative overflow-hidden">
    <div class="d-flex align-items-center pe-1">
      <button class="box-btn" aria-label="折叠"><svg width="4" height="2"><path d="M0 1h4" stroke="#000" stroke-width="2"/></svg></button>
      <div class="dline flex-grow-1 ms-1 me-1"></div>
      <button class="box-btn" aria-label="关闭选项板"><svg width="6" height="6"><path d="M1 1l4 4M5 1L1 5" stroke="#000" stroke-width="1.500"/></svg></button>
    </div>
    <div class="pick d-flex align-items-center">
      <div class="combo ps-1" style="width:173px"><select class="form-select cn" aria-label="选择集"><option>无选择</option></select></div>
      <div class="d-flex ms-1">
      <button class="pal-btn" aria-label="切换 PICKADD"><svg width="13" height="13" viewBox="0 0 16 16"><path d="M1 1h11v11H1zM4 4h11v11H4z" fill="#e0edf8" stroke="#567896"/><path d="M9.500 6v7M6 9.500h7" stroke="#1f528e" stroke-width="2"/></svg></button>
      <button class="pal-btn" aria-label="选择对象"><svg width="13" height="13" viewBox="0 0 16 16"><path d="M2 2h10v12H2z" fill="#fff" stroke="#77869a"/><path d="M5 1l5 6M10 1L5 7" stroke="#c42032" stroke-width="1.500"/><path d="M11 8l4 6-4 1z" fill="#345"/></svg></button>
      <button class="pal-btn" aria-label="快速选择"><svg width="13" height="13" viewBox="0 0 16 16"><path d="M1 2h12L9 8v6l-3-2V8z" fill="#527fb8" stroke="#2d4f7e"/><path d="M14 5l-4 5h3l-3 5 6-7h-3z" fill="#f1d22c" stroke="#8e7811"/></svg></button>
      </div>
    </div>
    <div class="sheets d-flex">
      <div class="sec-list flex-grow-1 overflow-hidden">
        <div class="sec">
          <button class="sec-h d-flex align-items-center justify-content-between"><span>基本</span><svg width="8" height="8"><use href="#chev"/></svg></button>
          <table class="props">
            <tr><th>颜色</th><td><span class="swatch me-1 align-middle"></span>&nbsp;ByLayer</td></tr>
            <tr><th>图层</th><td>粗实线</td></tr>
            <tr><th>线型</th><td><svg class="d-inline-block align-middle ms-1 me-1" width="44" height="1"><path d="M0 .5h44" stroke="#222"/></svg>ByLayer</td></tr>
            <tr><th><label for="lts">线型比例</label></th><td><input id="lts" value="1"></td></tr>
            <tr><th>线宽</th><td><svg class="d-inline-block align-middle ms-1 me-1" width="44" height="1"><path d="M0 .5h44" stroke="#222"/></svg>ByLayer</td></tr>
            <tr><th><label for="thk">厚度</label></th><td><input id="thk" value="0"></td></tr>
          </table>
        </div>
        <div class="sec">
          <button class="sec-h d-flex align-items-center justify-content-between"><span>三维效果</span><svg width="8" height="8"><use href="#chev"/></svg></button>
          <table class="props">
            <tr><th>材质</th><td>ByLayer</td></tr>
            <tr><th>阴影显示</th><td>投射和接收阴影</td></tr>
          </table>
        </div>
        <div class="sec">
          <button class="sec-h d-flex align-items-center justify-content-between"><span>打印样式</span><svg width="8" height="8"><use href="#chev"/></svg></button>
          <table class="props">
            <tr><th>打印样式</th><td class="ro">随颜色</td></tr>
            <tr><th>打印样式表</th><td>无</td></tr>
            <tr><th>打印表附着到</th><td class="ro">模型</td></tr>
            <tr><th>打印表类型</th><td class="ro">不可用</td></tr>
          </table>
        </div>
        <div class="sec position-relative">
          <button class="sec-h d-flex align-items-center justify-content-between"><span>视图</span><svg width="8" height="8"><use href="#chev"/></svg></button>
          <svg class="ears position-absolute" width="30" height="14"><circle cx="7" cy="7" r="7" fill="#f3f3f1"/><circle cx="23" cy="8" r="7" fill="#f3f3f1"/></svg>
          <table class="props"><tr><th></th><td class="ro"></td></tr><tr><th></th><td class="ro"></td></tr></table>
        </div>
      </div>
      <div class="scroller flex-shrink-0 d-flex flex-column">
        <div class="arr d-flex justify-content-center align-items-center"><svg width="6" height="4"><path d="M0 4h6L3 0z"/></svg></div>
        <div class="bar"></div>
        <div class="arr d-flex justify-content-center align-items-center mt-auto"><svg width="6" height="4"><path d="M0 0h6L3 4z"/></svg></div>
      </div>
    </div>
    <div class="hint"></div>
    <div class="gauge position-absolute"><svg width="8" height="44"><path d="M4.500 4v20" stroke="#59647a" stroke-width="3" stroke-dasharray="1 1"/><path d="M4.500 25v14" stroke="#7fb45a" stroke-width="3" stroke-dasharray="2 1"/></svg></div>
  </aside>
</main>

<footer class="status-bar d-flex flex-shrink-0 ps-1">
  <div class="coords">367.4741,  99.0682 ,   0.0000</div>
  <div class="d-flex ms-1">
    <button class="mode">捕捉</button><button class="mode">栅格</button><button class="mode">正交</button><button class="mode on">极轴</button><button class="mode on">对象捕捉</button><button class="mode on">对象追踪</button><button class="mode la on">DUCS</button><button class="mode la on">DYN</button><button class="mode on">线宽</button><button class="mode on">模型</button>
  </div>
  <div class="tray ms-auto d-flex"><svg class="ms-1" width="10" height="10" viewBox="0 0 16 16"><path d="M2 1h8v9H2z" fill="#718ebb"/><path d="M5 8h8v7H5z" fill="#4b6794"/></svg><svg class="ms-1" width="12" height="12"><use href="#unlock"/></svg></div>
  <svg class="ms-2" width="6" height="11"><path d="M0 7h5L2.500 10z"/></svg>
  <svg class="ms-1 me-1" width="13" height="12"><path d="M.5.5h12v12H.5z" fill="#a9cbe8" stroke="#4878a5"/></svg>
</footer>

<div class="promo position-absolute d-flex align-items-center">
  <svg class="ms-3 me-2" width="36" height="38" viewBox="0 0 36 38" fill="none" stroke="#c6cddd" stroke-width="3">
    <path d="M8 10v19c0 4 3 5 6 3l16-8c5-3 5-7 0-10L15 4C11 1 8 4 8 8z"/><path d="M2 7v22c0 5 4 8 9 6"/>
    <path d="M13 13v12l7-6z" fill="#c6cddd" stroke="none"/><path d="M22.500 15v8" stroke-width="2"/>
  </svg>
  <div class="d-flex flex-column"><b>溜溜自学</b><span>ZiXUE.3D66.COM</span></div>
</div>
<script src="https://cdn.jsdelivr.net/npm/bootstrap@5.3.0/dist/js/bootstrap.bundle.min.js"></script>
</body>
</html>
